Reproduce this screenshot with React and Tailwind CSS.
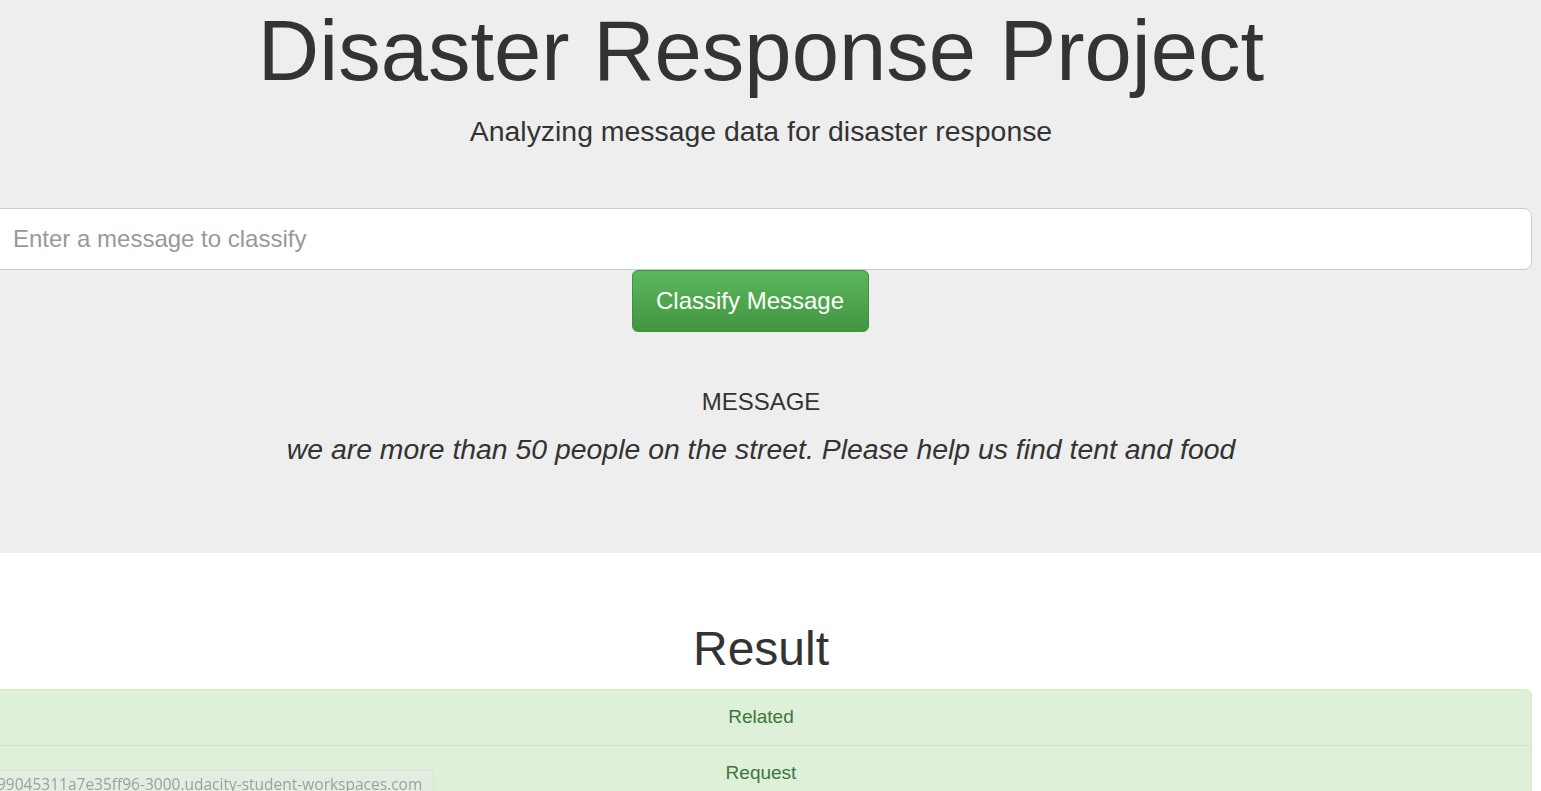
import React from 'react';

const results = ['Related', 'Request'];

const App = () => {
    return (
        <div className="relative min-h-[791px] overflow-hidden bg-white text-[#333] font-['Liberation_Sans',Arial,sans-serif]">
            <div className="bg-[#eeeeee] h-[553px]">
                <div className="w-[1542px] ml-[-10px] text-center">
                    <h1 className="text-[85px] leading-[100px] pt-[1px]">Disaster Response Project</h1>
                    <p className="text-[28.4px] leading-[32px] mt-[14px]">Analyzing message data for disaster response</p>

                    <form className="mt-[61px] flex flex-col items-center">
                        <input
                            type="text"
                            placeholder="Enter a message to classify"
                            className="w-full h-[62px] px-[22px] text-[24px] bg-white border border-[#cccccc] rounded-[8px] placeholder:text-[#999] outline-none"
                        />
                        <button
                            type="button"
                            className="h-[62px] w-[237px] mr-[22px] text-[24px] text-white rounded-[6px] border border-[#3e8f3e] bg-gradient-to-b from-[#5cb85c] to-[#419641]"
                        >
                            Classify Message
                        </button>
                    </form>

                    <div className="mt-[54px]">
                        <p className="text-[24px] leading-[32px]">MESSAGE</p>
                        <p className="text-[28.4px] italic leading-[32px] mt-[15px]">
                            we are more than 50 people on the street. Please help us find tent and food
                        </p>
                    </div>
                </div>
            </div>

            <div className="w-[1542px] ml-[-10px] text-center">
                <h2 className="text-[48px] leading-[60px] mt-[66px] mb-[10px]">Result</h2>
                <div className="border border-[#d6e9c6] rounded-t-[6px] overflow-hidden">
                    {results.map((r, i) => (
                        <div
                            key={r}
                            className={`h-[55px] flex items-center justify-center bg-[#dff0d8] text-[#3c763d] text-[19px] ${i > 0 ? 'border-t border-[#d0e2c8]' : ''}`}
                        >
                            {r}
                        </div>
                    ))}
                </div>
            </div>

            {/* browser status bubble */}
            <div className="fixed left-0 bottom-0 w-[434px] h-[21px] bg-[#e3ede0] border-t border-r border-[#d8e3d4] rounded-tr-[3px] overflow-hidden">
                <span className="block ml-[-3px] pt-[2px] text-[15.5px] leading-[22px] text-[#9aa39a] whitespace-nowrap font-['Open_Sans',sans-serif]">
                    99045311a7e35ff96-3000.udacity-student-workspaces.com
                </span>
            </div>
        </div>
    );
};

export default App;
